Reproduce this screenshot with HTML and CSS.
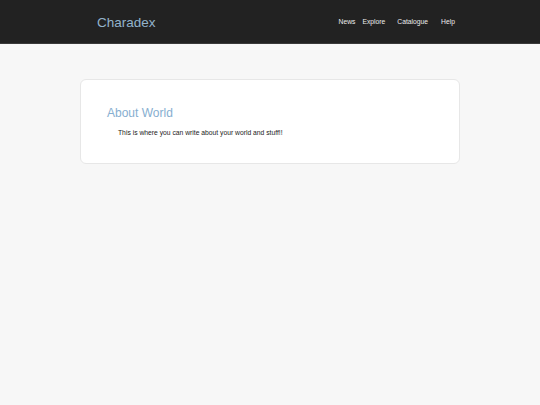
FILE: index.html
```html
<!DOCTYPE html>
<html>
<head>
<meta charset="utf-8">
<link rel="stylesheet" href="styles.css">
</head>
<body>
<header class="topbar">
  <a class="brand" href="#">Charadex</a>
  <nav class="nav">
    <a class="nav-link news" href="#">News</a>
    <a class="nav-link explore" href="#">Explore</a>
    <a class="nav-link catalogue" href="#">Catalogue</a>
    <a class="nav-link help" href="#">Help</a>
  </nav>
</header>
<main class="page">
  <section class="card">
    <h1 class="card-title">About World</h1>
    <p class="card-text">This is where you can write about your world and stuff!!</p>
  </section>
</main>
</body>
</html>
```

FILE: styles.css
```css
html, body {
  margin: 0;
  padding: 0;
  background: #f7f7f7;
  font-family: "Liberation Sans", Arial, sans-serif;
}
.topbar {
  height: 43px;
  background: #222222;
  border-bottom: 1px solid #3a3a3a;
  display: flex;
  align-items: center;
  padding: 0 85px 0 97px;
}
.brand {
  color: #93b3cb;
  font-size: 13.5px;
  text-decoration: none;
  line-height: 1;
  margin-top: 2px;
}
.nav {
  margin-left: auto;
  margin-top: 2px;
  display: flex;
  align-items: center;
}
.nav-link {
  color: #ececec;
  font-size: 6.75px;
  text-decoration: none;
  line-height: 1;
}
.explore { margin-left: 7px; }
.catalogue { margin-left: 12px; }
.help { margin-left: 13px; }
.page {
  padding: 35px 80px;
}
.card {
  background: #ffffff;
  border: 1px solid #e7e7e7;
  border-radius: 6px;
  padding: 26px 26px 26px;
}
.card-title {
  margin: 0;
  font-weight: normal;
  font-size: 12px;
  line-height: 14px;
  color: #86aed0;
}
.card-text {
  margin: 8px 0 0 11px;
  font-size: 6.75px;
  line-height: 9px;
  color: #222222;
}
```
